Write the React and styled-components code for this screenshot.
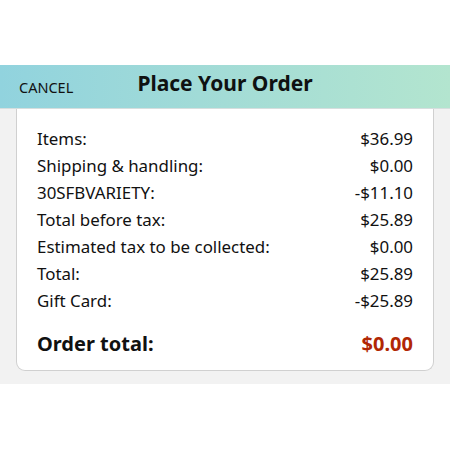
import React from "react";
import styled, { createGlobalStyle } from "styled-components";

const Global = createGlobalStyle`
  html, body { margin: 0; padding: 0; background: #ffffff; }
  body { font-family: "Noto Sans", "Open Sans", Arial, sans-serif; color: #111; }
`;

const Page = styled.div`
  display: flex;
  flex-direction: column;
  padding-top: 65px;
`;

const Header = styled.header`
  height: 43px;
  display: flex;
  align-items: center;
  position: relative;
  background: linear-gradient(90deg, #91d3de 0%, #a3dcd6 50%, #b3e5cf 100%);
  border-bottom: 1px solid #d6dede;
`;

const Cancel = styled.button`
  background: none;
  border: none;
  padding: 0 0 0 19px;
  font-family: inherit;
  font-size: 14.5px;
  color: #111;
  margin-top: 0;
`;

const Title = styled.h1`
  position: absolute;
  left: 0;
  right: 0;
  top: 50%;
  transform: translateY(-50%);
  margin: -4px 0 0;
  text-align: center;
  font-size: 21px;
  font-weight: 700;
  color: #0f1111;
  pointer-events: none;
`;

const Section = styled.section`
  background: #f2f2f2;
  padding: 0 16px 13px;
`;

const Card = styled.div`
  background: #fff;
  border: 1px solid #d0d0d0;
  border-top: none;
  border-radius: 0 0 9px 9px;
  padding: 16px 20px 12px 20px;
  display: flex;
  flex-direction: column;
`;

const Row = styled.div`
  display: flex;
  justify-content: space-between;
  align-items: center;
  height: ${(p) => (p.$total ? "30px" : "27px")};
  margin-top: ${(p) => (p.$total ? "14px" : "0")};
  font-size: ${(p) => (p.$total ? "20px" : "16.9px")};
  font-weight: ${(p) => (p.$total ? 700 : 400)};
  color: #111;
`;

const Amount = styled.span`
  color: ${(p) => (p.$red ? "#b12704" : "#111")};
`;

const rows = [
  ["Items:", "$36.99"],
  ["Shipping & handling:", "$0.00"],
  ["30SFBVARIETY:", "-$11.10"],
  ["Total before tax:", "$25.89"],
  ["Estimated tax to be collected:", "$0.00"],
  ["Total:", "$25.89"],
  ["Gift Card:", "-$25.89"],
];

export default function App() {
  return (
    <>
      <Global />
      <Page>
        <Header>
          <Cancel>CANCEL</Cancel>
          <Title>Place Your Order</Title>
        </Header>
        <Section>
          <Card>
            {rows.map(([l, v]) => (
              <Row key={l}>
                <span>{l}</span>
                <Amount>{v}</Amount>
              </Row>
            ))}
            <Row $total>
              <span>Order total:</span>
              <Amount $red>$0.00</Amount>
            </Row>
          </Card>
        </Section>
      </Page>
    </>
  );
}
